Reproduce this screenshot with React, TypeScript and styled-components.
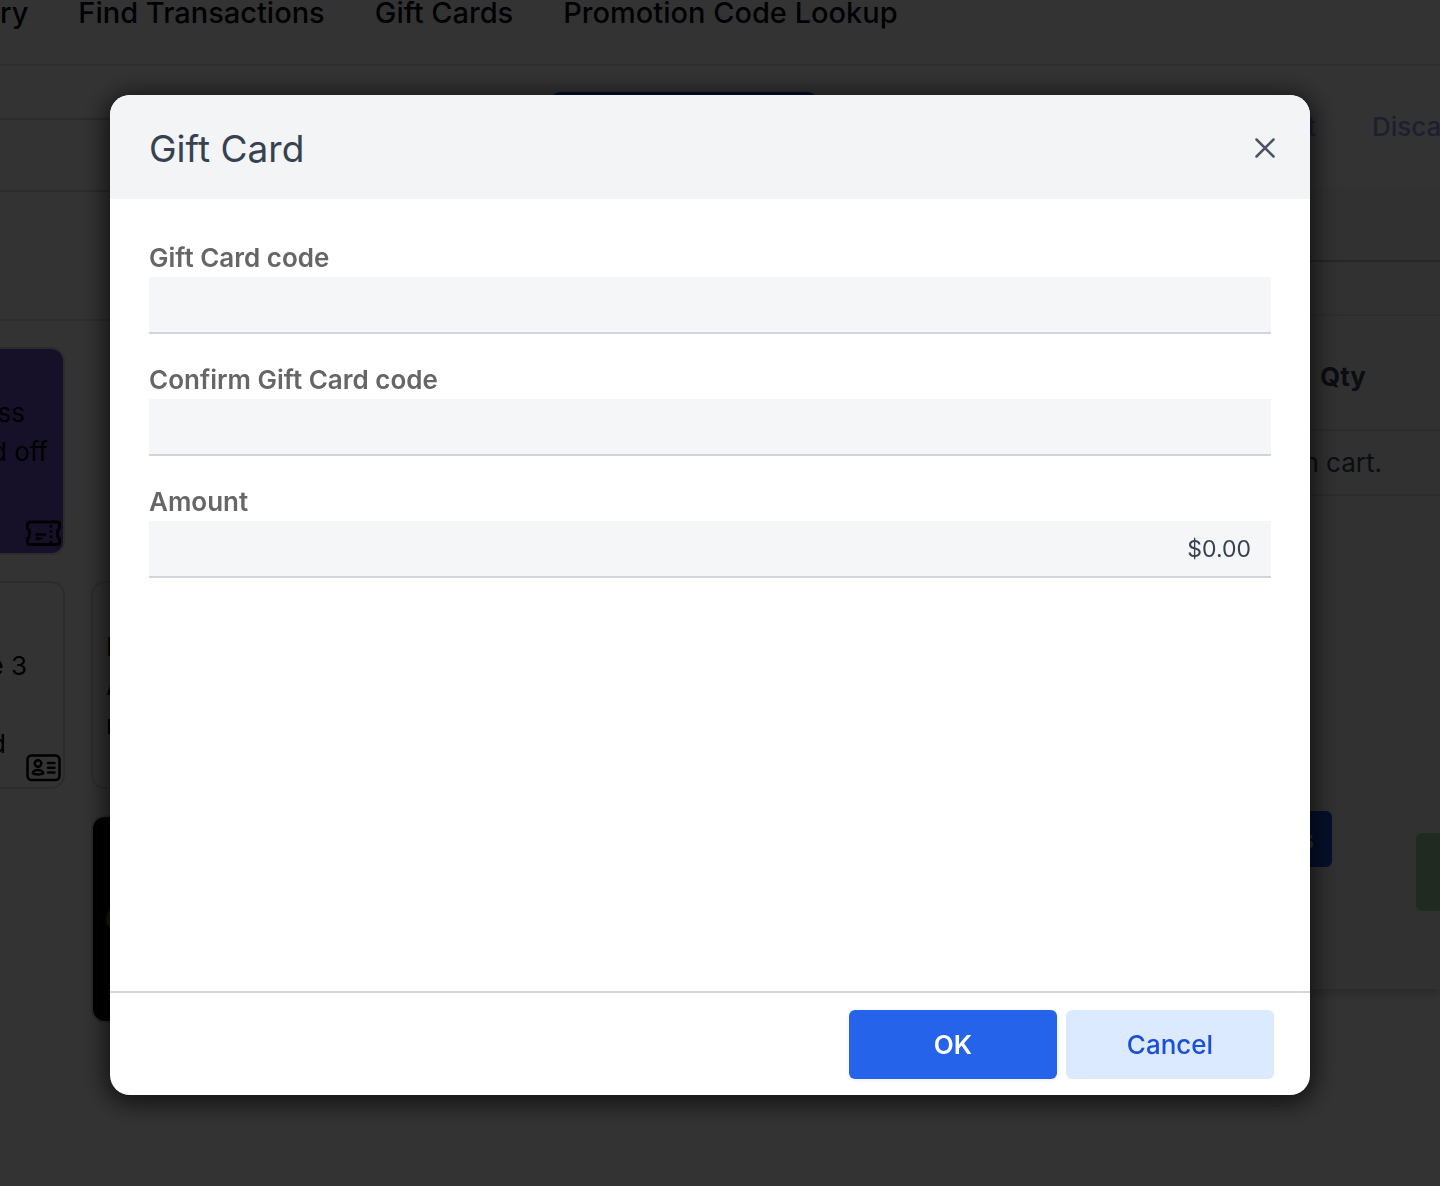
import React, { useState } from "react";
import styled, { createGlobalStyle } from "styled-components";

const GlobalStyle = createGlobalStyle`
  * { box-sizing: border-box; }
  body {
    margin: 0;
    background: #ffffff;
    color: #111827;
    font-family: Inter, "Liberation Sans", sans-serif;
    font-size: 26px;
    line-height: 39px;
  }
  button, input { font: inherit; }
`;

const Page = styled.div`
  min-height: 100vh;
  overflow: hidden;
`;

const Nav = styled.nav`
  display: flex;
  gap: 50px;
  height: 66px;
  border-bottom: 2px solid #e5e5e5;
`;

const NavLink = styled.a`
  color: #030712;
  font-size: 29px;
  font-weight: 500;
  line-height: 26px;
  white-space: nowrap;
  text-decoration: none;
`;

const Columns = styled.main`
  display: flex;
`;

const Catalog = styled.section`
  flex: 0 0 60%;
  min-width: 0;
`;

const SearchRow = styled.div`
  display: flex;
  align-items: flex-end;
  gap: 32px;
  height: 126px;
`;

const SearchInput = styled.input`
  width: 520px;
  height: 74px;
  border: 2px solid #d4d4d4;
  border-left: 0;
  background: #ffffff;
`;

const SearchButton = styled.button`
  width: 264px;
  height: 100px;
  border: 0;
  border-radius: 8px;
  background: #1d4ed8;
`;

const CategoryBar = styled.div`
  height: 129px;
  border-bottom: 2px solid #e0e0e0;
`;

const TileGrid = styled.div`
  display: grid;
  grid-template-columns: repeat(4, 208px);
  grid-auto-rows: 208px;
  gap: 26px;
  margin: 26px 0 0 -143px;
`;

const Tile = styled.div<{ $fill?: string; $column?: number }>`
  display: flex;
  flex-direction: column;
  justify-content: center;
  position: relative;
  grid-column: ${({ $column }) => $column ?? "auto"};
  padding: 0 13px;
  border: 2px solid #dcdcdc;
  border-radius: 14px;
  background: ${({ $fill }) => $fill ?? "transparent"};
  color: #000000;
`;

const TileLine = styled.span<{ $inset?: number }>`
  min-height: 39px;
  padding-right: ${({ $inset }) => $inset ?? 0}px;
  text-align: ${({ $inset }) => ($inset === undefined ? "left" : "right")};
  white-space: nowrap;
`;

const TileBadge = styled.svg`
  position: absolute;
  right: 2px;
  bottom: 4px;
  width: 35px;
  height: 30px;
  fill: none;
  stroke: #000000;
  stroke-width: 3;
  stroke-linecap: round;
  stroke-linejoin: round;
`;

const TileDot = styled.span`
  width: 24px;
  height: 24px;
  border-radius: 50%;
  background: #8a8000;
`;

const CartColumn = styled.section`
  flex: 1;
  min-width: 0;
`;

const CartActions = styled.div`
  display: flex;
  align-items: center;
  justify-content: flex-end;
  gap: 56px;
  height: 121px;
`;

const TextButton = styled.button<{ $clipped?: boolean }>`
  flex: none;
  width: ${({ $clipped }) => ($clipped ? "68px" : "auto")};
  padding: 0;
  border: 0;
  background: none;
  color: #8f9cf4;
  font-weight: 500;
  text-align: left;
  white-space: nowrap;
`;

const CartPanel = styled.div`
  display: flex;
  flex-direction: column;
  height: 802px;
  background: #f5f5f5;
  box-shadow: 0 6px 8px rgba(0, 0, 0, 0.16);
`;

const CustomerBar = styled.div`
  height: 75px;
  border-bottom: 2px solid #bcbcbc;
`;

const CartMeta = styled.div`
  height: 54px;
  border-bottom: 2px solid #e2e2e2;
`;

const CartTable = styled.table`
  width: 100%;
  border-collapse: collapse;
`;

const HeadCell = styled.th`
  height: 114px;
  padding: 8px 74px 0 0;
  border-bottom: 2px solid #dadada;
  color: #374151;
  font-weight: 700;
  text-align: right;
`;

const BodyCell = styled.td`
  height: 65px;
  padding: 0 58px 0 0;
  border-bottom: 2px solid #dadada;
  color: #374151;
  text-align: right;
`;

const CartFooter = styled.div`
  display: flex;
  align-items: flex-start;
  justify-content: flex-end;
  gap: 84px;
  margin-top: auto;
  height: 178px;
`;

const DetailsButton = styled.button`
  width: 120px;
  height: 56px;
  padding: 0 18px;
  border: 0;
  border-radius: 6px;
  background: #1d4ed8;
  color: #ffffff;
  font-weight: 500;
  text-align: right;
`;

const PayButton = styled.button`
  width: 24px;
  height: 78px;
  margin-top: 22px;
  border: 0;
  border-radius: 6px 0 0 6px;
  background: #9fcf9f;
`;

const Overlay = styled.div`
  position: fixed;
  inset: 0;
  padding: 95px 130px 91px 110px;
  background: rgba(0, 0, 0, 0.8);
`;

const Dialog = styled.form`
  display: flex;
  flex-direction: column;
  height: 100%;
  overflow: hidden;
  border-radius: 20px;
  background: #ffffff;
  box-shadow: 0 4px 26px 4px rgba(0, 0, 0, 0.7);
`;

const DialogHeader = styled.header`
  display: flex;
  flex: none;
  align-items: center;
  justify-content: space-between;
  height: 104px;
  padding: 2px 34px 0 39px;
  background: #f3f4f6;
`;

const DialogTitle = styled.h2`
  margin: 0;
  color: #374151;
  font-size: 37px;
  font-weight: 400;
`;

const CloseButton = styled.button`
  display: flex;
  padding: 0;
  border: 0;
  background: none;
  color: #4b5563;
`;

const DialogBody = styled.div`
  display: flex;
  flex: 1;
  flex-direction: column;
  gap: 26px;
  padding: 39px;
`;

const Field = styled.div`
  display: flex;
  flex-direction: column;
`;

const FieldLabel = styled.label`
  color: #666666;
  font-weight: 600;
`;

const FieldInput = styled.input<{ $align?: "left" | "right" }>`
  width: 100%;
  height: 57px;
  padding: 0 20px;
  border: 0;
  border-bottom: 2px solid #d1d5db;
  border-radius: 0;
  outline: none;
  background: #f5f6f8;
  color: #374151;
  font-size: 23px;
  text-align: ${({ $align }) => $align ?? "left"};
`;

const DialogFooter = styled.footer`
  display: flex;
  flex: none;
  justify-content: flex-end;
  gap: 9px;
  padding: 17px 36px 16px;
  border-top: 2px solid #d1d5db;
`;

const DialogButton = styled.button<{ $primary?: boolean }>`
  width: 208px;
  height: 69px;
  border: 0;
  border-radius: 6px;
  background: ${({ $primary }) => ($primary ? "#2563eb" : "#dbeafe")};
  color: ${({ $primary }) => ($primary ? "#ffffff" : "#1d4ed8")};
  font-weight: ${({ $primary }) => ($primary ? 600 : 500)};
  box-shadow: ${({ $primary }) => ($primary ? "0 1px 4px rgba(0, 0, 0, 0.08)" : "none")};
`;

const TicketIcon = () => (
  <TileBadge viewBox="0 0 35 30" aria-hidden="true">
    <path d="M4 3H31C32.5 3 33.500 4 33.500 5.500V9C30.500 12 30.500 17 33.500 20V23C33.500 24.500 32.500 25.500 31 25.500H4C2.500 25.500 1.500 24.500 1.500 23V20C4.500 17 4.500 12 1.500 9V5.500C1.500 4 2.500 3 4 3Z" />
    <path d="M10.500 15.500H19M10.500 19.500H15" strokeWidth="2.400" />
    <path d="M25 6V25" strokeWidth="2.600" strokeLinecap="butt" strokeDasharray="2.500 2.800" />
  </TileBadge>
);

const IdCardIcon = () => (
  <TileBadge viewBox="0 0 35 30" aria-hidden="true">
    <rect x="1.500" y="2.500" width="32" height="24.500" rx="4" strokeWidth="2.500" />
    <circle cx="12" cy="10.500" r="3.300" strokeWidth="2.500" />
    <path d="M6.800 20.500C7.500 15.800 16.500 15.800 17.300 20.500C15 21.800 9 21.800 6.800 20.500Z" strokeWidth="2.500" />
    <path d="M22 10H28.500M22 14.800H28.500M22 19.500H28.500" strokeWidth="2.500" />
  </TileBadge>
);

const CloseIcon = () => (
  <svg width="22" height="22" viewBox="0 0 22 22" fill="none" stroke="currentColor" strokeWidth="2.500" strokeLinecap="round" aria-hidden="true">
    <path d="M2.500 2.500L19.500 19.500M19.500 2.500L2.500 19.500" />
  </svg>
);

export default function App() {
  const [code, setCode] = useState("");
  const [confirmCode, setConfirmCode] = useState("");
  const [amount, setAmount] = useState("$0.00");

  return (
    <>
      <GlobalStyle />
      <Page>
        <Nav>
          <NavLink href="#">ry</NavLink>
          <NavLink href="#">Find Transactions</NavLink>
          <NavLink href="#">Gift Cards</NavLink>
          <NavLink href="#">Promotion Code Lookup</NavLink>
        </Nav>
        <Columns>
          <Catalog>
            <SearchRow>
              <SearchInput aria-label="Search" />
              <SearchButton type="button" aria-label="Search" />
            </SearchRow>
            <CategoryBar />
            <TileGrid>
              <Tile $fill="#6e50cd">
                <TileLine $inset={25}>ss</TileLine>
                <TileLine $inset={2}>d off</TileLine>
                <TileLine />
                <TicketIcon />
              </Tile>
              <Tile $column={1}>
                <TileLine />
                <TileLine $inset={23}>e 3</TileLine>
                <TileLine />
                <TileLine $inset={44}>d</TileLine>
                <IdCardIcon />
              </Tile>
              <Tile $column={2}>
                <TileLine>E</TileLine>
                <TileLine>A</TileLine>
                <TileLine>n</TileLine>
              </Tile>
              <Tile $column={2} $fill="#0c0600">
                <TileDot />
              </Tile>
            </TileGrid>
          </Catalog>
          <CartColumn>
            <CartActions>
              <TextButton type="button">t</TextButton>
              <TextButton type="button" $clipped>Disca</TextButton>
            </CartActions>
            <CartPanel>
              <CustomerBar />
              <CartMeta />
              <CartTable>
                <thead>
                  <tr><HeadCell scope="col">Qty</HeadCell></tr>
                </thead>
                <tbody>
                  <tr><BodyCell>n cart.</BodyCell></tr>
                </tbody>
              </CartTable>
              <CartFooter>
                <DetailsButton type="button">s</DetailsButton>
                <PayButton type="button" aria-label="Pay" />
              </CartFooter>
            </CartPanel>
          </CartColumn>
        </Columns>
      </Page>
      <Overlay>
        <Dialog role="dialog" aria-modal="true" aria-labelledby="dialog-title" onSubmit={(e) => e.preventDefault()}>
          <DialogHeader>
            <DialogTitle id="dialog-title">Gift Card</DialogTitle>
            <CloseButton type="button" aria-label="Close"><CloseIcon /></CloseButton>
          </DialogHeader>
          <DialogBody>
            <Field>
              <FieldLabel htmlFor="code">Gift Card code</FieldLabel>
              <FieldInput id="code" value={code} onChange={(e) => setCode(e.target.value)} />
            </Field>
            <Field>
              <FieldLabel htmlFor="confirm">Confirm Gift Card code</FieldLabel>
              <FieldInput id="confirm" value={confirmCode} onChange={(e) => setConfirmCode(e.target.value)} />
            </Field>
            <Field>
              <FieldLabel htmlFor="amount">Amount</FieldLabel>
              <FieldInput id="amount" $align="right" value={amount} onChange={(e) => setAmount(e.target.value)} />
            </Field>
          </DialogBody>
          <DialogFooter>
            <DialogButton type="submit" $primary>OK</DialogButton>
            <DialogButton type="button">Cancel</DialogButton>
          </DialogFooter>
        </Dialog>
      </Overlay>
    </>
  );
}
